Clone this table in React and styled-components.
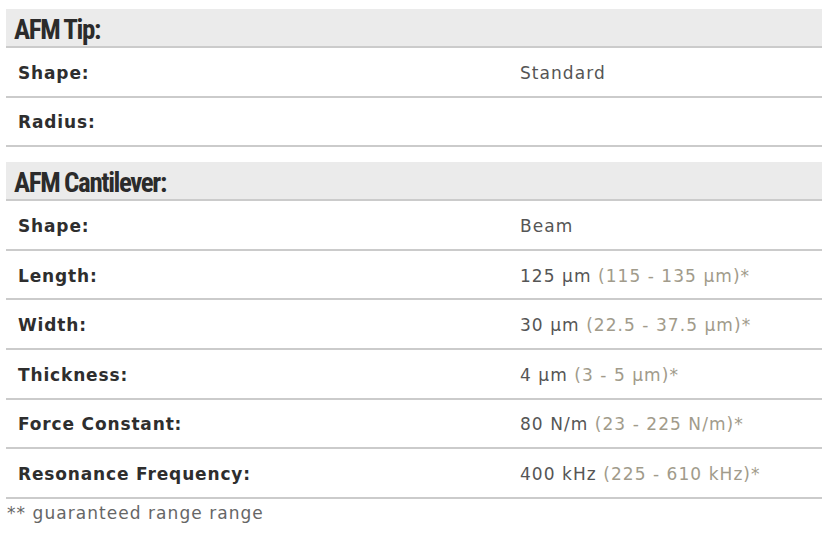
import React from "react";
import styled, { createGlobalStyle } from "styled-components";

const Global = createGlobalStyle`
  html, body { margin: 0; padding: 0; background: #fff; }
  body { font-family: "DejaVu Sans", Verdana, sans-serif; }
`;

const Page = styled.div`
  padding: 9px 0 0 6px;
  width: 816px;
`;

const Section = styled.section`
  margin-bottom: ${(p) => (p.$last ? "0" : "15px")};
`;

const Heading = styled.h2`
  margin: 0;
  box-sizing: content-box;
  padding: 8px 8px 0;
  height: 29px;
  background: #ebebeb;
  border-bottom: 2px solid #cbcbcb;
  font-family: "Liberation Sans Narrow", "Roboto Condensed", "Liberation Sans", sans-serif;
  font-weight: 700;
  font-size: 27px;
  line-height: 27px;
  letter-spacing: -1.4px;
  color: #2b2b2b;
`;

const Row = styled.div`
  display: grid;
  grid-template-columns: 502px 1fr;
  align-items: center;
  height: 47.6px;
  border-bottom: 2px solid #cbcbcb;
`;

const Label = styled.div`
  padding: 2px 12px 0;
  font-weight: 700;
  font-size: 17px;
  letter-spacing: 0.85px;
  color: #2e2e2e;
`;

const Value = styled.div`
  padding: 2px 12px 0;
  font-size: 17px;
  letter-spacing: 1.05px;
  color: #555;
`;

const Range = styled.span`
  color: #a19b8b;
`;

const Note = styled.p`
  margin: 4px 0 0 1px;
  font-size: 17px;
  letter-spacing: 1.05px;
  color: #666;
`;

const tip = [
  { label: "Shape:", value: "Standard" },
  { label: "Radius:", value: "" },
];

const cantilever = [
  { label: "Shape:", value: "Beam" },
  { label: "Length:", value: "125 µm", range: "(115 - 135 µm)*" },
  { label: "Width:", value: "30 µm", range: "(22.5 - 37.5 µm)*" },
  { label: "Thickness:", value: "4 µm", range: "(3 - 5 µm)*" },
  { label: "Force Constant:", value: "80 N/m", range: "(23 - 225 N/m)*" },
  { label: "Resonance Frequency:", value: "400 kHz", range: "(225 - 610 kHz)*" },
];

function Rows({ items }) {
  return items.map((r, i) => (
    <Row key={i}>
      <Label>{r.label}</Label>
      <Value>
        {r.value}
        {r.range && <Range> {r.range}</Range>}
      </Value>
    </Row>
  ));
}

export default function App() {
  return (
    <>
      <Global />
      <Page>
        <Section>
          <Heading>AFM Tip:</Heading>
          <Rows items={tip} />
        </Section>
        <Section $last>
          <Heading>AFM Cantilever:</Heading>
          <Rows items={cantilever} />
        </Section>
        <Note>** guaranteed range range</Note>
      </Page>
    </>
  );
}
